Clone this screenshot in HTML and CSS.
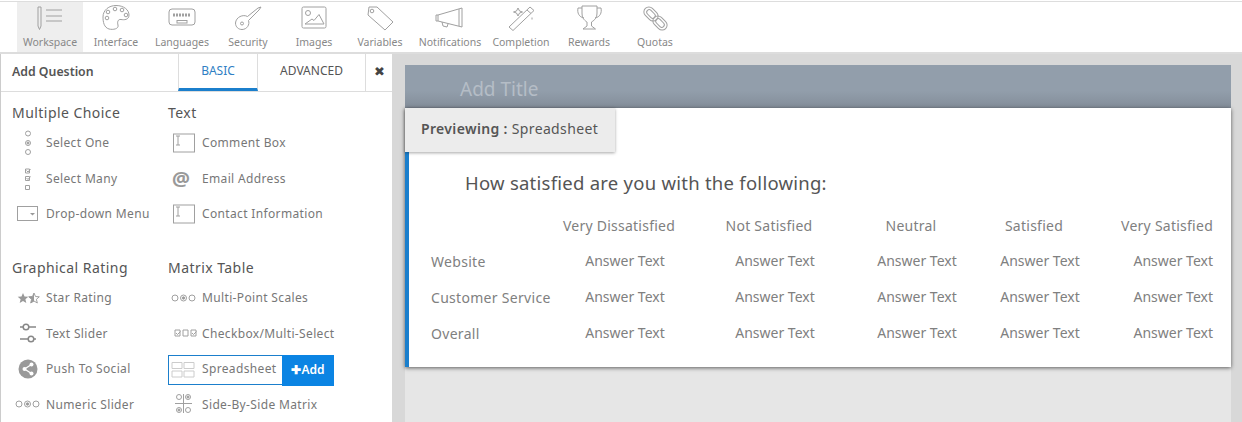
FILE: index.html
```html
<!DOCTYPE html>
<html lang="en">
<head>
    <meta charset="UTF-8">
    <title>Survey Builder</title>
    <link rel="stylesheet" href="styles.css">
</head>
<body>
    <nav class="toolbar">
        <div class="tool active">
            <svg viewBox="0 0 40 30"><path d="M8 3h3v19l-1.500 3.500L8 22zM16 6h16M16 12h16M16 17h16"/></svg>
            <span>Workspace</span>
        </div>
        <div class="tool">
            <svg viewBox="0 0 40 30"><path d="M20 1.500C28 1.500 33 6 33 11c0 5-5 5-8 4.500s-4 2.500-3 5.500c1 4-5 5-9 4-5-1.500-6-7-6-12C7 6 13 1.500 20 1.500z"/><circle cx="12" cy="8" r="1.800"/><circle cx="19" cy="5" r="1.800"/><circle cx="26" cy="6" r="1.800"/><circle cx="30" cy="11" r="1.800"/><circle cx="11" cy="14" r="1.800"/></svg>
            <span>Interface</span>
        </div>
        <div class="tool">
            <svg viewBox="0 0 40 30"><rect x="7" y="5" width="26" height="16" rx="3"/><path class="keys" d="M11 11h18"/><rect x="15" y="16.500" width="10" height="2.500"/></svg>
            <span>Languages</span>
        </div>
        <div class="tool">
            <svg viewBox="0 0 40 30"><path d="M19.500 12.500C15 10 8 13 7.500 19c0 4 3 6.500 6.500 6.500 5 0 8-5 6.500-9L31 6l2-3-3 1-10.500 8.500z"/><circle cx="14" cy="19.500" r="1.500"/></svg>
            <span>Security</span>
        </div>
        <div class="tool">
            <svg viewBox="0 0 40 30"><rect x="8" y="3" width="24" height="21" rx="1.500"/><circle cx="14" cy="9" r="2.500"/><path d="M11 20l7-5 2 1.500 5-6 5 9.500z"/></svg>
            <span>Images</span>
        </div>
        <div class="tool">
            <svg viewBox="0 0 40 30"><path d="M9 3h8l16 15-8 8L8 11z"/><circle cx="12" cy="7" r="1.800"/></svg>
            <span>Variables</span>
        </div>
        <div class="tool notify">
            <svg viewBox="0 0 40 30"><path d="M8 11l24-7v19L8 17zM29 5v17M8 11H6v6h2M12 18l1 4 4 1 1-3"/></svg>
            <span>Notifications</span>
        </div>
        <div class="tool medium">
            <svg viewBox="0 0 40 30"><path d="M8 23l21-20 4 3.500-21 20zM26 6l4 3.500M17 4l1.500 3 3 1-3 1-1.500 3-1.500-3-3-1 3-1zM31 13.500v2"/></svg>
            <span>Completion</span>
        </div>
        <div class="tool medium">
            <svg viewBox="0 0 40 30"><path d="M13 2h15v7c0 6-4 8-5.500 9v4l4 3H14l4-3v-4c-1.500-1-5-3-5-9zM13 4H9c-1 5 1 9 6 10M28 4h4c1 5-1 9-6 10"/></svg>
            <span>Rewards</span>
        </div>
        <div class="tool quotas">
            <svg viewBox="0 0 40 30"><rect x="8" y="5" width="16" height="10" rx="5" transform="rotate(45 16 10)"/><rect x="11" y="7.500" width="10" height="5" rx="2.500" transform="rotate(45 16 10)"/><rect x="17" y="14" width="16" height="10" rx="5" transform="rotate(45 25 19)"/><rect x="20" y="16.500" width="10" height="5" rx="2.500" transform="rotate(45 25 19)"/></svg>
            <span>Quotas</span>
        </div>
    </nav>

    <main class="workspace">
        <aside class="panel">
            <div class="panel-head">
                <h2>Add Question</h2>
                <div class="tab selected">BASIC</div>
                <div class="tab advanced">ADVANCED</div>
                <div class="close">&#10006;</div>
            </div>

            <div class="question-grid">
                <section class="group">
                    <h3>Multiple Choice</h3>
                    <div class="item">
                        <svg viewBox="0 0 30 30"><circle cx="16" cy="5.500" r="2.500"/><circle cx="16" cy="15" r="2.500"/><circle class="dot" cx="16" cy="15" r="1"/><circle cx="16" cy="24" r="2.500"/></svg>
                        <span>Select One</span>
                    </div>
                    <div class="item">
                        <svg viewBox="0 0 30 30"><path d="M13.500 6h4v4h-4zM13.500 13.500h4v4h-4zM14.500 15l1.500 1.500 2.500-3M13.500 22.500h4v4h-4zM14.500 7.500l1.500 1.500 2.500-3"/></svg>
                        <span>Select Many</span>
                    </div>
                    <div class="item">
                        <svg viewBox="0 0 30 30"><rect x="5.500" y="7.500" width="20" height="14"/><path class="fill" d="M18 14h5l-2.500 2.500z"/></svg>
                        <span>Drop-down Menu</span>
                    </div>
                </section>

                <section class="group">
                    <h3>Text</h3>
                    <div class="item">
                        <svg viewBox="0 0 30 30"><use href="#text-box"/></svg>
                        <span>Comment Box</span>
                    </div>
                    <div class="item">
                        <b class="at">@</b>
                        <span>Email Address</span>
                    </div>
                    <div class="item">
                        <svg viewBox="0 0 30 30"><use href="#text-box"/></svg>
                        <span>Contact Information</span>
                    </div>
                </section>

                <section class="group">
                    <h3>Graphical Rating</h3>
                    <div class="item">
                        <svg viewBox="0 0 30 30"><path class="fill" d="M11 10l1.500 3.500 3.800.3-2.900 2.500.9 3.700-3.300-2-3.300 2 .9-3.700-2.900-2.500 3.800-.3z"/><path d="M22 10l1.500 3.500 3.800.3-2.900 2.500.9 3.700-3.300-2-3.300 2 .9-3.700-2.900-2.500 3.800-.3z"/><path class="fill" d="M22 10v8l-3.300 2 .9-3.700-2.900-2.500 3.800-.3z"/></svg>
                        <span>Star Rating</span>
                    </div>
                    <div class="item">
                        <svg class="heavy" viewBox="0 0 30 30"><path d="M8 9h16M8 21h16"/><circle class="knob" cx="14" cy="9" r="2.800"/><circle class="knob" cx="19" cy="21" r="2.800"/></svg>
                        <span>Text Slider</span>
                    </div>
                    <div class="item">
                        <svg viewBox="0 0 30 30"><circle class="fill" cx="16" cy="15" r="9.500"/><path class="white" d="M19.500 10.500l-7 4.500 7 4.500"/><circle class="white-dot" cx="19.500" cy="10.500" r="2"/><circle class="white-dot" cx="12.500" cy="15" r="2"/><circle class="white-dot" cx="19.500" cy="19.500" r="2"/></svg>
                        <span>Push To Social</span>
                    </div>
                    <div class="item">
                        <svg viewBox="0 0 30 30"><use href="#three-radios"/></svg>
                        <span>Numeric Slider</span>
                    </div>
                </section>

                <section class="group">
                    <h3>Matrix Table</h3>
                    <div class="item">
                        <svg viewBox="0 0 30 30"><use href="#three-radios"/></svg>
                        <span>Multi-Point Scales</span>
                    </div>
                    <div class="item">
                        <svg viewBox="0 0 30 30"><path d="M7 12h5v6H7zM15 12h5v6h-5zM23 12h5v6h-5zM8 15l1.500 1.500 3-3M24 15l1.500 1.500 3-3"/></svg>
                        <span>Checkbox/Multi-Select</span>
                    </div>
                    <div class="item picked">
                        <svg class="light" viewBox="0 0 30 30"><path d="M4 7.500h10v6H4zM16 7.500h10v6H16zM4 16h10v6H4zM16 16h10v6H16z"/></svg>
                        <span>Spreadsheet</span>
                        <div class="add-btn">&#10010;Add</div>
                    </div>
                    <div class="item">
                        <svg viewBox="0 0 30 30"><circle cx="11" cy="8" r="2.500"/><circle cx="20" cy="8" r="2.500"/><circle class="dot" cx="20" cy="8" r="1"/><circle cx="11" cy="21" r="2.500"/><circle class="dot" cx="11" cy="21" r="1"/><circle cx="20" cy="21" r="2.500"/><path d="M7 14.500h17M15.500 5v19"/></svg>
                        <span>Side-By-Side Matrix</span>
                    </div>
                </section>
            </div>
        </aside>

        <section class="stage">
            <div class="sheet">
                <header class="sheet-head">Add Title</header>
                <div class="card">
                    <div class="preview-tag"><b>Previewing :</b> Spreadsheet</div>
                    <h1>How satisfied are you with the following:</h1>
                    <div class="matrix">
                        <div></div>
                        <div class="col-head">Very Dissatisfied</div>
                        <div class="col-head">Not Satisfied</div>
                        <div class="col-head">Neutral</div>
                        <div class="col-head">Satisfied</div>
                        <div class="col-head last">Very Satisfied</div>

                        <div class="row-label">Website</div>
                        <div class="answer">Answer Text</div>
                        <div class="answer">Answer Text</div>
                        <div class="answer">Answer Text</div>
                        <div class="answer">Answer Text</div>
                        <div class="answer last">Answer Text</div>

                        <div class="row-label">Customer Service</div>
                        <div class="answer">Answer Text</div>
                        <div class="answer">Answer Text</div>
                        <div class="answer">Answer Text</div>
                        <div class="answer">Answer Text</div>
                        <div class="answer last">Answer Text</div>

                        <div class="row-label">Overall</div>
                        <div class="answer">Answer Text</div>
                        <div class="answer">Answer Text</div>
                        <div class="answer">Answer Text</div>
                        <div class="answer">Answer Text</div>
                        <div class="answer last">Answer Text</div>
                    </div>
                </div>
            </div>
        </section>
    </main>

    <svg class="defs" width="0" height="0">
        <g id="text-box"><rect x="5.500" y="6" width="21" height="18"/><path d="M8 8h4M10 8v9M8 17h4"/></g>
        <g id="three-radios"><circle cx="7" cy="15" r="3"/><circle cx="15.500" cy="15" r="3"/><circle class="dot" cx="15.500" cy="15" r="1.200"/><circle cx="24" cy="15" r="3"/></g>
    </svg>
</body>
</html>
```

FILE: styles.css
```css
* {
    box-sizing: border-box;
}

html, body {
    margin: 0;
    height: 100%;
    overflow: hidden;
}

body {
    display: flex;
    flex-direction: column;
    padding-top: 1px;
    font-family: "Noto Sans", "Open Sans", sans-serif;
    background-color: #fff;
    color: #777;
}

svg {
    fill: none;
    stroke: #a0a0a0;
    stroke-width: 1;
}

.defs {
    position: absolute;
}

/* top toolbar */
.toolbar {
    display: flex;
    flex: 0 0 53px;
    padding-left: 17px;
    border-top: 1px solid #ddd;
    border-bottom: 2px solid #ddd;
}

.tool {
    display: flex;
    flex: 0 0 66px;
    flex-direction: column;
    align-items: center;
    padding-top: 2px;
    font-size: 10.500px;
    color: #888;
    white-space: nowrap;
}

.tool svg {
    width: 40px;
    height: 30px;
}

.tool span {
    line-height: 16px;
}

.tool.active {
    background-color: #eee;
}

.tool.notify {
    flex-basis: 74px;
}

.tool.medium {
    flex-basis: 68px;
}

.tool.quotas {
    flex-basis: 64px;
}

.keys {
    stroke-width: 3;
    stroke-dasharray: 2 1;
}

/* left panel */
.workspace {
    display: flex;
    flex: 1;
    min-height: 0;
}

.panel {
    flex: 0 0 392px;
    border-left: 1px solid #ccc;
    background-color: #fff;
}

.panel-head {
    display: flex;
    height: 38px;
    border-bottom: 1px solid #ddd;
}

.panel-head h2 {
    flex: 0 0 177px;
    margin: 0;
    padding-left: 11px;
    font-size: 12.300px;
    font-weight: 600;
    line-height: 36px;
    color: #555;
}

.tab {
    flex: 0 0 80px;
    font-size: 12px;
    line-height: 34px;
    text-align: center;
    color: #555;
}

.tab.selected {
    border-left: 1px solid #ddd;
    border-right: 1px solid #ddd;
    border-bottom: 3px solid #1b7fcc;
    color: #2f7fc4;
}

.tab.advanced {
    flex-basis: 107px;
}

.close {
    flex: 1;
    border-left: 1px solid #ddd;
    font-size: 13px;
    line-height: 34px;
    text-align: center;
    color: #444;
}

.question-grid {
    display: grid;
    grid-template-columns: 156px 1fr;
    padding: 11px 0 0 11px;
}

.group {
    height: 155px;
}

.group h3 {
    margin: 0;
    font-size: 14px;
    font-weight: 400;
    letter-spacing: 0.450px;
    line-height: 20px;
    color: #555;
}

.item {
    display: flex;
    align-items: center;
    height: 35.500px;
    font-size: 12px;
    letter-spacing: 0.350px;
    white-space: nowrap;
}

.group h3 + .item {
    margin-top: 2px;
}

.item svg {
    flex: 0 0 30px;
    width: 30px;
    height: 30px;
    margin-right: 4px;
}

.at {
    flex: 0 0 34px;
    padding-left: 4px;
    font-size: 20px;
    color: #999;
}

.dot, .fill {
    fill: #999;
}

.fill {
    stroke: none;
}

.knob {
    fill: #fff;
}

.item svg.heavy {
    stroke: #888;
    stroke-width: 1.500;
}

.white {
    stroke: #fff;
    stroke-width: 1.300;
}

.white-dot {
    fill: #fff;
    stroke: none;
}

.item svg.light {
    stroke: #ccc;
}

.item.picked {
    position: relative;
    width: 114px;
    height: 30px;
    margin: 4px 0 1.500px;
    border: 1px solid #1b7fcc;
    border-right: none;
}

.item.picked svg {
    margin-left: -1px;
}

.item.picked span {
    margin-top: -3px;
}

.add-btn {
    position: absolute;
    left: 113px;
    top: -1px;
    width: 52px;
    height: 31px;
    background-color: #0b84e3;
    color: #fff;
    font-size: 12px;
    font-weight: 600;
    letter-spacing: 0;
    line-height: 30px;
    text-align: center;
}

/* preview area */
.stage {
    flex: 1;
    padding: 11px 11px 0 13px;
    background-color: #d8d8d8;
}

.sheet {
    display: flex;
    flex-direction: column;
    height: 100%;
    background-color: #e6e6e6;
}

.sheet-head {
    height: 43px;
    padding-left: 55px;
    background: linear-gradient(#929eab, #929eab 60%, #838d99);
    color: #b5bdc6;
    font-size: 19px;
    line-height: 49px;
}

.card {
    position: relative;
    height: 259px;
    padding: 62px 18px 0 0;
    border-left: 4px solid #1b7fcc;
    background-color: #fff;
    box-shadow: 0 1px 4px rgba(0, 0, 0, 0.6);
}

.preview-tag {
    position: absolute;
    left: -4px;
    top: 0;
    width: 210px;
    height: 44px;
    padding-left: 16px;
    background-color: #ececec;
    box-shadow: 0 1px 3px rgba(0, 0, 0, 0.35);
    font-size: 14px;
    letter-spacing: 0.350px;
    line-height: 42px;
    color: #555;
}

.preview-tag b {
    font-weight: 600;
}

.card h1 {
    margin: 0 0 12px 56px;
    font-size: 18.500px;
    font-weight: 400;
    letter-spacing: 0.250px;
    line-height: 26px;
    color: #555;
}

.matrix {
    display: grid;
    grid-template-columns: 124px 140px 160px 124px 122px 112px;
    grid-auto-rows: 36px;
    margin-left: 22px;
    font-size: 14px;
    line-height: 36px;
    color: #808080;
}

.col-head {
    padding-right: 12px;
    letter-spacing: 0.250px;
    text-align: center;
    white-space: nowrap;
}

.answer {
    text-align: center;
    white-space: nowrap;
    margin-top: -1px;
}

.col-head.last, .answer.last {
    padding-right: 0;
    text-align: right;
}

.row-label {
    letter-spacing: 0.300px;
    white-space: nowrap;
}
```
